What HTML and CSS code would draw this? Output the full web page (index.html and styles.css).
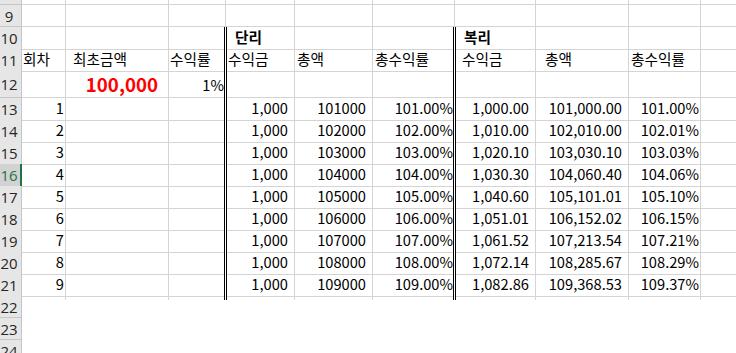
FILE: index.html
```html
<!DOCTYPE html>
<html lang="ko">
<head>
<meta charset="utf-8">
<title>단리 복리 계산</title>
<link rel="stylesheet" href="styles.css">
</head>
<body>
<div class="sheet">
  <div class="row r8">
    <div class="h"></div><div class="c"></div><div class="c"></div><div class="c"></div><div class="c"></div><div class="c"></div><div class="c"></div><div class="c"></div><div class="c"></div><div class="c"></div><div class="c e"></div>
  </div>
  <div class="row">
    <div class="h">9</div><div class="c"></div><div class="c"></div><div class="c"></div><div class="c"></div><div class="c"></div><div class="c"></div><div class="c"></div><div class="c"></div><div class="c"></div><div class="c e"></div>
  </div>
  <div class="row">
    <div class="h">10</div><div class="c"></div><div class="c"></div><div class="c dr"></div><div class="c dl b p9">단리</div><div class="c"></div><div class="c dr"></div><div class="c dl b p9">복리</div><div class="c"></div><div class="c"></div><div class="c e"></div>
  </div>
  <div class="row">
    <div class="h">11</div><div class="c p1">회차</div><div class="c p7">최초금액</div><div class="c dr p1">수익률</div><div class="c dl">수익금</div><div class="c">총액</div><div class="c dr">총수익률</div><div class="c dl p7">수익금</div><div class="c p9">총액</div><div class="c">총수익률</div><div class="c e"></div>
  </div>
  <div class="row r12">
    <div class="h">12</div><div class="c"></div><div class="c n big">100,000</div><div class="c dr n">1%</div><div class="c dl"></div><div class="c"></div><div class="c dr"></div><div class="c dl"></div><div class="c"></div><div class="c"></div><div class="c e"></div>
  </div>
  <div class="row">
    <div class="h">13</div><div class="c n">1</div><div class="c"></div><div class="c dr"></div><div class="c dl n w">1,000</div><div class="c n w">101000</div><div class="c dr n">101.00%</div><div class="c dl n w">1,000.00</div><div class="c n w">101,000.00</div><div class="c n">101.00%</div><div class="c e"></div>
  </div>
  <div class="row">
    <div class="h">14</div><div class="c n">2</div><div class="c"></div><div class="c dr"></div><div class="c dl n w">1,000</div><div class="c n w">102000</div><div class="c dr n">102.00%</div><div class="c dl n w">1,010.00</div><div class="c n w">102,010.00</div><div class="c n">102.01%</div><div class="c e"></div>
  </div>
  <div class="row">
    <div class="h">15</div><div class="c n">3</div><div class="c"></div><div class="c dr"></div><div class="c dl n w">1,000</div><div class="c n w">103000</div><div class="c dr n">103.00%</div><div class="c dl n w">1,020.10</div><div class="c n w">103,030.10</div><div class="c n">103.03%</div><div class="c e"></div>
  </div>
  <div class="row">
    <div class="h sel">16</div><div class="c n">4</div><div class="c"></div><div class="c dr"></div><div class="c dl n w">1,000</div><div class="c n w">104000</div><div class="c dr n">104.00%</div><div class="c dl n w">1,030.30</div><div class="c n w">104,060.40</div><div class="c n">104.06%</div><div class="c e"></div>
  </div>
  <div class="row">
    <div class="h">17</div><div class="c n">5</div><div class="c"></div><div class="c dr"></div><div class="c dl n w">1,000</div><div class="c n w">105000</div><div class="c dr n">105.00%</div><div class="c dl n w">1,040.60</div><div class="c n w">105,101.01</div><div class="c n">105.10%</div><div class="c e"></div>
  </div>
  <div class="row">
    <div class="h">18</div><div class="c n">6</div><div class="c"></div><div class="c dr"></div><div class="c dl n w">1,000</div><div class="c n w">106000</div><div class="c dr n">106.00%</div><div class="c dl n w">1,051.01</div><div class="c n w">106,152.02</div><div class="c n">106.15%</div><div class="c e"></div>
  </div>
  <div class="row">
    <div class="h">19</div><div class="c n">7</div><div class="c"></div><div class="c dr"></div><div class="c dl n w">1,000</div><div class="c n w">107000</div><div class="c dr n">107.00%</div><div class="c dl n w">1,061.52</div><div class="c n w">107,213.54</div><div class="c n">107.21%</div><div class="c e"></div>
  </div>
  <div class="row">
    <div class="h">20</div><div class="c n">8</div><div class="c"></div><div class="c dr"></div><div class="c dl n w">1,000</div><div class="c n w">108000</div><div class="c dr n">108.00%</div><div class="c dl n w">1,072.14</div><div class="c n w">108,285.67</div><div class="c n">108.29%</div><div class="c e"></div>
  </div>
  <div class="row">
    <div class="h">21</div><div class="c n">9</div><div class="c"></div><div class="c dr"></div><div class="c dl n w">1,000</div><div class="c n w">109000</div><div class="c dr n">109.00%</div><div class="c dl n w">1,082.86</div><div class="c n w">109,368.53</div><div class="c n">109.37%</div><div class="c e"></div>
  </div>
  <div class="row">
    <div class="h">22</div><div class="s"></div><div class="s"></div><div class="s sdr"></div><div class="s sdl"></div><div class="s"></div><div class="s sdr"></div><div class="s sdl"></div><div class="s"></div><div class="s"></div><div class="s e"></div>
  </div>
  <div class="row">
    <div class="h">23</div>
  </div>
  <div class="row">
    <div class="h">24</div>
  </div>
</div>
</body>
</html>
```

FILE: styles.css
```css
:root {
  --g: #d4d4d4;
  --hl: #c6c6c6;
}

html, body {
  margin: 0;
  padding: 0;
  background: #fff;
  overflow: hidden;
}

.sheet {
  width: 736px;
}

.row {
  display: grid;
  grid-template-columns: 22px 44px 103px 57px 69px 78px 82px 81px 93px 72px 1fr;
  height: 22px;
}

.row.r8 { height: 5px; }
.row.r12 { height: 27px; }

.h {
  background-color: #e6e6e6;
  background-image: linear-gradient(var(--hl), var(--hl)), linear-gradient(var(--hl), var(--hl));
  background-position: right top, left bottom;
  background-size: 1px 100%, 100% 1px;
  background-repeat: no-repeat;
  font-family: "Open Sans", "Noto Sans", sans-serif;
  font-size: 15px;
  color: #262626;
  display: flex;
  align-items: center;
  justify-content: center;
  padding-right: 4px;
  line-height: 1;
  white-space: nowrap;
}

.h.sel {
  background-color: #d2d2d2;
  color: #217346;
  background-image: linear-gradient(#217346, #217346), linear-gradient(var(--hl), var(--hl)), linear-gradient(var(--hl), var(--hl));
  background-position: right top, right top, left bottom;
  background-size: 2px 100%, 1px 100%, 100% 1px;
}

.c {
  background-image: linear-gradient(var(--g), var(--g)), linear-gradient(var(--g), var(--g));
  background-position: right top, left bottom;
  background-size: 1px 100%, 100% 1px;
  background-repeat: no-repeat;
  font-family: "Noto Sans CJK KR", "Liberation Sans", sans-serif;
  font-size: 14.67px;
  line-height: 20px;
  color: #000;
  display: flex;
  align-items: flex-end;
  padding: 0 2px 3px 2px;
  white-space: nowrap;
  box-sizing: border-box;
  min-width: 0;
}

.c.e {
  background-size: 0 0, 100% 1px;
}

.c.dr {
  background-image: linear-gradient(#000, #000), linear-gradient(#fff, #fff), linear-gradient(var(--g), var(--g));
  background-position: right 1px top, right top, left bottom;
  background-size: 1px 100%, 1px 100%, 100% 1px;
}

.c.dl {
  background-image: linear-gradient(#000, #000), linear-gradient(var(--g), var(--g)), linear-gradient(var(--g), var(--g));
  background-position: left top, right top, left bottom;
  background-size: 1px 100%, 1px 100%, 100% 1px;
}

.s {
  background-image: linear-gradient(var(--g), var(--g));
  background-position: right top;
  background-size: 1px 4px;
  background-repeat: no-repeat;
}

.s.e {
  background-size: 0 0;
}

.s.sdr {
  background-image: linear-gradient(#000, #000), linear-gradient(#fff, #fff);
  background-position: right 1px top, right top;
  background-size: 1px 4px, 1px 4px;
}

.s.sdl {
  background-image: linear-gradient(#000, #000), linear-gradient(var(--g), var(--g));
  background-position: left top, right top;
  background-size: 1px 4px, 1px 4px;
}

.b { font-weight: bold; }
.p1 { padding-left: 1px; }
.p7 { padding-left: 7px; }
.p9 { padding-left: 9px; }

.n { justify-content: flex-end; }
.n.w { padding-right: 7px; }

.big {
  color: #ff0000;
  font-weight: bold;
  font-size: 18.67px;
  line-height: 23.5px;
  padding-right: 11px;
}
```
